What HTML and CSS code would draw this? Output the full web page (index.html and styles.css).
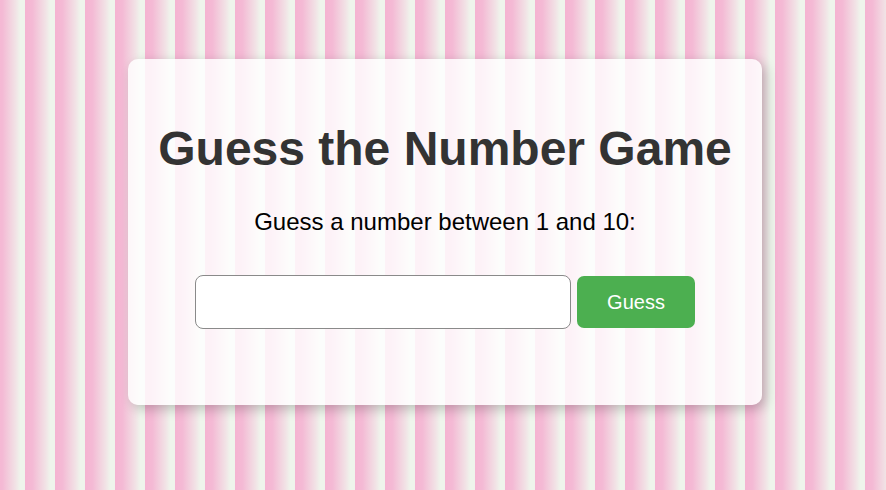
FILE: index.html
```html
<!DOCTYPE html>
<html lang="en">
<head>
<meta charset="utf-8">
<title>Guess the Number Game</title>
<link rel="stylesheet" href="styles.css">
</head>
<body>
  <div class="card">
    <h1 class="title">Guess the Number Game</h1>
    <p class="prompt">Guess a number between 1 and 10:</p>
    <div class="row">
      <input class="guess-input" type="number">
      <button class="guess-btn">Guess</button>
    </div>
    <p class="result"></p>
  </div>
</body>
</html>
```

FILE: styles.css
```css
html, body {
  margin: 0;
  height: 100%;
}
body {
  font-family: "Liberation Sans", Arial, sans-serif;
  background-image: linear-gradient(90deg, #f5b4d1 0%, #f4bad5 25%, #f1e4e6 70%, #eff5ec 85%, #eff5ec 100%);
  background-size: 30px 100%;
  background-position: 25px 0;
  display: flex;
  justify-content: center;
  align-items: flex-start;
  padding: 59px 0 0 4px;
  box-sizing: border-box;
  overflow: hidden;
}
.card {
  width: 634px;
  height: 346px;
  box-sizing: border-box;
  background: rgba(255, 255, 255, 0.82);
  border-radius: 10px;
  box-shadow: 4px 4px 12px rgba(0, 0, 0, 0.22);
  padding: 30px 30px;
  text-align: center;
}
.title {
  margin: 32px 0 32px;
  font-size: 48px;
  font-weight: bold;
  color: #333;
  line-height: normal;
}
.prompt {
  margin: 0 0 39px;
  font-size: 24px;
  color: #000;
  line-height: normal;
}
.row {
  display: flex;
  justify-content: center;
  align-items: center;
  gap: 6px;
}
.guess-input {
  width: 376px;
  height: 54px;
  box-sizing: border-box;
  border: 1px solid #8a8a8a;
  border-radius: 8px;
  background: #fff;
  font-size: 20px;
  font-family: inherit;
  padding: 0 12px;
  outline: none;
}
.guess-btn {
  width: 118px;
  height: 52px;
  border: none;
  border-radius: 7px;
  background: #4caf50;
  color: #fff;
  font-size: 20px;
  font-family: inherit;
  cursor: pointer;
}
.result {
  margin: 0;
}
```
